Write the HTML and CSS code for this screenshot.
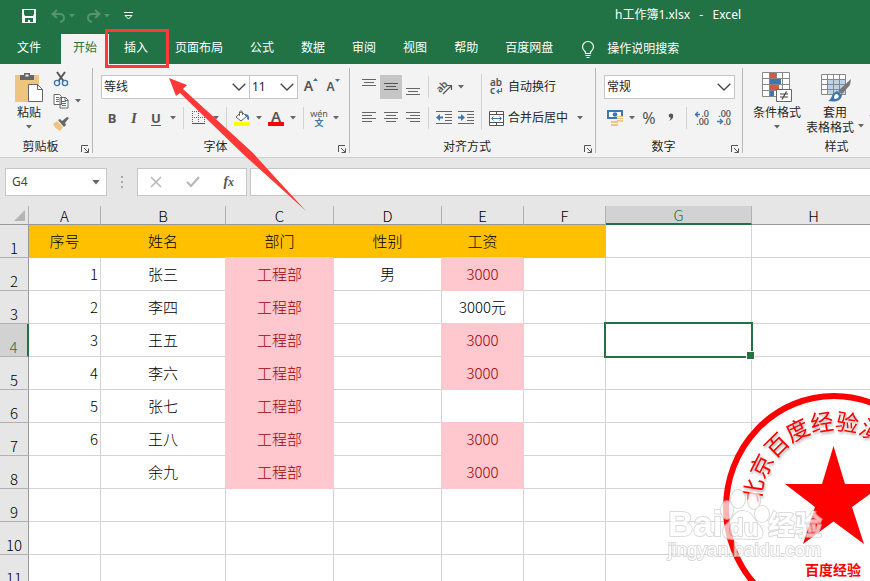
FILE: index.html
```html
<!DOCTYPE html>
<html lang="zh-CN">

<head>
    <meta charset="UTF-8">
    <meta name="viewport" content="width=device-width, initial-scale=1.0">
    <title>h工作簿1.xlsx - Excel</title>
    <link rel="stylesheet" href="styles.css">
</head>

<body>
    <!-- shared icons -->
    <svg class="defs" width="0" height="0" aria-hidden="true">
        <symbol id="caret" viewBox="0 0 6 4"><path d="M0 0h6L3 3.5z" fill="currentColor" /></symbol>
        <symbol id="chevron" viewBox="0 0 14 8"><path d="M.7.7 7 7 13.3.7" fill="none" stroke="#444" stroke-width="1.3" /></symbol>
        <symbol id="launch" viewBox="0 0 8 8"><path d="M.5 7V.5H7M3 3l4 4M7.5 3.500v4H3.500" fill="none" stroke="#555" /></symbol>
    </svg>

    <header class="titlebar">
        <button class="quick save" aria-label="保存"><svg width="14" height="14" viewBox="0 0 14 14"><path d="M0 0h14v14H0z" fill="#fff" /><path d="M2 1h10v4l-1 2H3L2 5zM3 9h8v4H8v-2H6v2H3z" fill="#217346" /></svg></button>
        <button class="quick faded" aria-label="撤消"><svg width="15" height="14" viewBox="0 0 15 14"><path d="M6 1 1.500 5 6 9M2 5h7c5 0 5.500 7 0 8" fill="none" stroke="currentColor" stroke-width="2" /></svg></button>
        <button class="quick-caret faded" aria-label="撤消列表"><svg width="6" height="4"><use href="#caret" /></svg></button>
        <button class="quick faded" aria-label="恢复"><svg width="15" height="14" viewBox="0 0 15 14"><path d="m9 1 4.500 4L9 9M13 5H6C1 5 .5 12 6 13" fill="none" stroke="currentColor" stroke-width="2" /></svg></button>
        <button class="quick-caret faded" aria-label="恢复列表"><svg width="6" height="4"><use href="#caret" /></svg></button>
        <button class="quick" aria-label="自定义快速访问工具栏"><svg width="9" height="8" viewBox="0 0 9 8"><path d="M0 .5h9M1 3.500h7L4.500 7z" fill="none" stroke="#fff" /></svg></button>
        <span class="doc-title">h工作簿1.xlsx&nbsp;&nbsp; -&nbsp;&nbsp; Excel</span>
    </header>

    <nav class="tabs">
        <button class="tab file">文件</button>
        <button class="tab active">开始</button>
        <button class="tab">插入</button>
        <button class="tab">页面布局</button>
        <button class="tab">公式</button>
        <button class="tab">数据</button>
        <button class="tab">审阅</button>
        <button class="tab">视图</button>
        <button class="tab">帮助</button>
        <button class="tab">百度网盘</button>
        <button class="tell-me">
            <svg width="14" height="17" viewBox="0 0 14 17"><path d="M4.500 12.500V11C3 9.500 1.500 8.500 1.500 6a5.500 5.500 0 0 1 11 0c0 2.500-1.500 3.500-3 5v1.500zM4.500 14.500h5M5.500 16.500h3" fill="none" stroke="#fff" stroke-width="1.2" /></svg>
            操作说明搜索
        </button>
    </nav>

    <section class="ribbon">
        <div class="group clipboard">
            <div class="group-body">
                <button class="big paste">
                    <svg width="30" height="30" viewBox="0 0 30 30"><path d="M1 3h24v27H1z" fill="#eec57e" /><path d="M6 3h4V1h6v2h4v5H6z" fill="#666" /><path d="M11.500 2.500h3v2h-3z" fill="#f3f3f3" /><path d="M14.500 12.500h9l5 5v12h-14z" fill="#fff" stroke="#666" /><path d="M23.500 12.500v5h5" fill="none" stroke="#666" /></svg>
                    <span>粘贴</span>
                    <svg width="6" height="4"><use href="#caret" /></svg>
                </button>
                <div class="stack">
                    <button class="icon" aria-label="剪切"><svg width="16" height="16" viewBox="0 0 16 16"><path d="m4 1 6.500 9M12 1 5.500 10" stroke="#555" stroke-width="2" /><circle cx="4" cy="12" r="2.600" fill="none" stroke="#3e76ad" stroke-width="1.400" /><circle cx="12" cy="12" r="2.600" fill="none" stroke="#3e76ad" stroke-width="1.400" /></svg></button>
                    <div class="tools">
                        <button class="icon" aria-label="复制"><svg width="16" height="15" viewBox="0 0 16 15"><path d="M1 .5h5.500l2 2v8H1zM7 3.500h5.500l2.500 2.500v8H7z" fill="#fff" stroke="#666" /><path d="M12 3.500v3h3" fill="none" stroke="#666" /><path d="M3 3.500h3M3 5.500h3M3 7.500h3M9 7.500h4M9 9.500h4M9 11.500h4" stroke="#3e76ad" /></svg></button>
                        <button class="drop" aria-label="复制选项"><svg width="6" height="4"><use href="#caret" /></svg></button>
                    </div>
                    <button class="icon" aria-label="格式刷"><svg width="16" height="15" viewBox="0 0 16 15"><path d="m0 8 4-3 6 6-3 4C4 13 2 12 0 8z" fill="#eec57e" /><path d="m5 4 2-1 2 2 5-4 2 1-4 5 1 2-2 2z" fill="#666" /></svg></button>
                </div>
            </div>
            <div class="group-foot"><span>剪贴板</span><button class="launcher" aria-label="剪贴板设置"><svg width="8" height="8"><use href="#launch" /></svg></button></div>
        </div>

        <div class="group font">
            <div class="group-body rows">
                <div class="tools">
                    <div class="combo font-name"><select aria-label="字体"><option>等线</option></select><svg width="14" height="8"><use href="#chevron" /></svg></div>
                    <div class="combo font-size"><select aria-label="字号"><option>11</option></select><svg width="14" height="8"><use href="#chevron" /></svg></div>
                    <button class="icon grow" aria-label="增大字号">A<svg width="5" height="3" viewBox="0 0 5 3"><path d="M0 3h5L2.500 0z" fill="#3e76ad" /></svg></button>
                    <button class="icon shrink" aria-label="减小字号">A<svg width="5" height="3" viewBox="0 0 5 3"><path d="M0 0h5L2.500 3z" fill="#3e76ad" /></svg></button>
                </div>
                <div class="tools">
                    <button class="icon letter bold" aria-label="加粗">B</button>
                    <button class="icon letter italic" aria-label="倾斜">I</button>
                    <button class="icon letter under" aria-label="下划线">U</button>
                    <button class="drop" aria-label="下划线选项"><svg width="6" height="4"><use href="#caret" /></svg></button>
                    <i class="sep"></i>
                    <button class="icon" aria-label="边框"><svg width="14" height="14" viewBox="0 0 14 14"><path d="M.5 0v13M6.500 0v13M12.500 0v13M0 .5h13M0 6.500h13" stroke="#666" stroke-dasharray="1 1" /><path d="M0 12.500h13" stroke="#555" /></svg></button>
                    <button class="drop" aria-label="边框选项"><svg width="6" height="4"><use href="#caret" /></svg></button>
                    <i class="sep"></i>
                    <button class="icon" aria-label="填充颜色"><svg width="16" height="16" viewBox="0 0 16 16"><path d="M7 2 2 7l5 4 6-5z" fill="#fff" stroke="#666" /><path d="M5.500 6V2q1.500-3 3 0v3" fill="none" stroke="#666" /><path d="M11 4q5 0 4 6l-2-1q1-3-2-3z" fill="#3e76ad" /><path d="M0 12h16v4H0z" fill="#ff0" /></svg></button>
                    <button class="drop" aria-label="填充颜色选项"><svg width="6" height="4"><use href="#caret" /></svg></button>
                    <button class="icon font-color" aria-label="字体颜色">A</button>
                    <button class="drop" aria-label="字体颜色选项"><svg width="6" height="4"><use href="#caret" /></svg></button>
                    <i class="sep"></i>
                    <button class="icon phonetic" aria-label="拼音"><span>wén</span><b>文</b></button>
                    <button class="drop" aria-label="拼音选项"><svg width="6" height="4"><use href="#caret" /></svg></button>
                </div>
            </div>
            <div class="group-foot"><span>字体</span><button class="launcher" aria-label="字体设置"><svg width="8" height="8"><use href="#launch" /></svg></button></div>
        </div>

        <div class="group align">
            <div class="group-body">
                <div class="rows">
                    <div class="tools">
                        <button class="icon" aria-label="顶端对齐"><svg width="14" height="18" viewBox="0 0 14 18"><path d="M0 1.500h14M2 4.500h10M0 7.500h14" stroke="#666" /></svg></button>
                        <button class="icon pressed" aria-label="垂直居中"><svg width="14" height="18" viewBox="0 0 14 18"><path d="M0 5.500h14M2 8.500h10M0 11.500h14" stroke="#555" /></svg></button>
                        <button class="icon" aria-label="底端对齐"><svg width="14" height="18" viewBox="0 0 14 18"><path d="M0 10.500h14M2 13.500h10M0 16.500h14" stroke="#666" /></svg></button>
                        <i class="sep"></i>
                        <button class="icon" aria-label="方向"><svg width="17" height="16" viewBox="0 0 17 16"><text x="0" y="11" transform="rotate(-45 6 8)" class="ab">ab</text><path d="m7 15 8-8M11 6.500h4.500V11" fill="none" stroke="#555" stroke-width="1.200" /></svg></button>
                        <button class="drop" aria-label="方向选项"><svg width="6" height="4"><use href="#caret" /></svg></button>
                    </div>
                    <div class="tools">
                        <button class="icon" aria-label="左对齐"><svg width="14" height="12" viewBox="0 0 14 12"><path d="M0 .5h14M0 3.500h10M0 6.500h14M0 9.500h10" stroke="#666" /></svg></button>
                        <button class="icon" aria-label="居中"><svg width="14" height="12" viewBox="0 0 14 12"><path d="M0 .5h14M2 3.500h10M0 6.500h14M2 9.500h10" stroke="#666" /></svg></button>
                        <button class="icon" aria-label="右对齐"><svg width="14" height="12" viewBox="0 0 14 12"><path d="M0 .5h14M4 3.500h10M0 6.500h14M4 9.500h10" stroke="#666" /></svg></button>
                        <i class="sep"></i>
                        <button class="icon" aria-label="减少缩进"><svg width="16" height="14" viewBox="0 0 16 14"><path d="M0 .5h16M9 3.500h7M9 6.500h7M9 9.500h7M0 12.500h16" stroke="#666" /><path d="M0 6.500 4 3v2.500h3v2H4V10z" fill="#3e76ad" /></svg></button>
                        <button class="icon" aria-label="增加缩进"><svg width="16" height="14" viewBox="0 0 16 14"><path d="M0 .5h16M9 3.500h7M9 6.500h7M9 9.500h7M0 12.500h16" stroke="#666" /><path d="M7 6.500 3 3v2.500H0v2h3V10z" fill="#3e76ad" /></svg></button>
                    </div>
                </div>
                <i class="sep tall"></i>
                <div class="rows">
                    <button class="wide">
                        <svg width="15" height="16" viewBox="0 0 15 16"><text x="1" y="7" class="ab">ab</text><text x="1" y="15" class="ab">c</text><path d="M12.500 9v3.500H8M10 10.500l-2 2 2 2" fill="none" stroke="#3e76ad" stroke-width="1.200" /></svg>
                        自动换行
                    </button>
                    <div class="tools">
                        <button class="wide">
                            <svg width="15" height="15" viewBox="0 0 15 15"><path d="M.5.5h14v14H.5zM0 3.500h15M0 11.500h15M7.500 0v3.500M7.500 11.500V15" fill="#fff" stroke="#555" /><path d="M3 7.500h9M4.500 5.500l-2 2 2 2M10.500 5.500l2 2-2 2" fill="none" stroke="#3e76ad" /></svg>
                            合并后居中
                        </button>
                        <button class="drop" aria-label="合并选项"><svg width="6" height="4"><use href="#caret" /></svg></button>
                    </div>
                </div>
            </div>
            <div class="group-foot"><span>对齐方式</span><button class="launcher" aria-label="对齐设置"><svg width="8" height="8"><use href="#launch" /></svg></button></div>
        </div>

        <div class="group number">
            <div class="group-body rows">
                <div class="combo"><select aria-label="数字格式"><option>常规</option></select><svg width="14" height="8"><use href="#chevron" /></svg></div>
                <div class="tools">
                    <button class="icon" aria-label="会计数字格式"><svg width="16" height="16" viewBox="0 0 16 16"><path d="M0 0h16v9H0z" fill="#3e76ad" /><path d="M2 2h12v5H2z" fill="#fff" /><circle cx="8" cy="4.500" r="2.300" fill="#3e76ad" /><path d="M10 6h6v6h-6zM4 11h7v5H4z" fill="#eec57e" /><path d="M10 7.500h6M10 9.500h6M4 13.500h7M11.500 12h3" stroke="#f3f3f3" /></svg></button>
                    <button class="drop" aria-label="会计格式选项"><svg width="6" height="4"><use href="#caret" /></svg></button>
                    <button class="icon percent" aria-label="百分比样式">%</button>
                    <button class="icon" aria-label="千位分隔样式"><svg width="6" height="10" viewBox="0 0 6 10"><path d="M1 1.500Q3-.5 5 1.500 6 6 1 8q2-2 1.500-3.500Q0 4 1 1.500z" fill="#555" /></svg></button>
                    <i class="sep"></i>
                    <button class="icon" aria-label="增加小数位数"><svg width="16" height="16" viewBox="0 0 16 16"><text x="15" y="7" class="digits">.0</text><text x="15" y="15" class="digits">.00</text><path d="M6 4.500H1.500M4 2 1.500 4.500 4 7" fill="none" stroke="#3e76ad" stroke-width="1.400" /></svg></button>
                    <button class="icon" aria-label="减少小数位数"><svg width="16" height="16" viewBox="0 0 16 16"><text x="15" y="7" class="digits">.00</text><text x="15" y="15" class="digits">.0</text><path d="M1 11.500h5.500M4 9l2.500 2.500L4 14" fill="none" stroke="#3e76ad" stroke-width="1.400" /></svg></button>
                </div>
            </div>
            <div class="group-foot"><span>数字</span><button class="launcher" aria-label="数字设置"><svg width="8" height="8"><use href="#launch" /></svg></button></div>
        </div>

        <div class="group styles">
            <div class="group-body">
                <button class="big">
                    <svg width="30" height="30" viewBox="0 0 30 30"><path d="M.5.5h27v24H.5z" fill="#fff" /><path d="M8 1h6v5H8zM8 13h9v5H8z" fill="#d35c40" /><path d="M8 7h11v5H8zM8 19h4v5H8z" fill="#3e76ad" /><path d="M.5.5h27v24H.5zM7.500 0v24M14.500 0v6M20.500 0v24M0 6.500h28M0 12.500h28M0 18.500h28" fill="none" stroke="#888" /><path d="M14.500 17.500h15v12h-15z" fill="#fff" stroke="#666" /><path d="M18 22h8M18 25h8M24.500 19.500l-4.500 8" stroke="#444" stroke-width="1.200" /></svg>
                    <span>条件格式</span>
                    <svg width="6" height="4"><use href="#caret" /></svg>
                </button>
                <button class="big">
                    <svg width="30" height="30" viewBox="0 0 30 30"><path d="M1.500 2.500h24v20h-24z" fill="#fff" /><path d="M8 8h18v15H8z" fill="#bcd2ea" /><path d="M1.500 2.500h24v20h-24zM7.500 2v20M13.500 2v20M19.500 2v20M1 7.500h24M1 12.500h24M1 17.500h24" fill="none" stroke="#888" /><path d="m31 7-1 6-8 9-4-3z" fill="#777" /><path d="m17 19 5 4c-1 7-8 7-14 6 4-1 3-8 9-10z" fill="#3e76ad" /><path d="M14 26q0-4 3-4l2 2q-1 3-4 3z" fill="#fff" /></svg>
                    <span>套用</span>
                    <span>表格格式 <svg width="6" height="4"><use href="#caret" /></svg></span>
                </button>
                <button class="big cell-styles">
                    <svg width="30" height="30" viewBox="0 0 30 30"><path d="M4.500 2.500h22v20h-22z" fill="#fff" stroke="#888" /></svg>
                    <span>单元格样式</span>
                    <svg width="6" height="4"><use href="#caret" /></svg>
                </button>
            </div>
            <div class="group-foot"><span>样式</span></div>
        </div>
    </section>

    <section class="formula-bar">
        <label class="name-box"><input type="text" value="G4" aria-label="名称框"><svg width="8" height="5"><use href="#caret" /></svg></label>
        <svg class="grip" width="3" height="12" viewBox="0 0 3 12"><path d="M0 0h2v2H0zM0 5h2v2H0zM0 10h2v2H0z" fill="#aaa" /></svg>
        <div class="formula-tools">
            <button aria-label="取消"><svg width="12" height="12" viewBox="0 0 12 12"><path d="m1 1 10 10M11 1 1 11" stroke="#b8b8b8" stroke-width="1.600" /></svg></button>
            <button aria-label="输入"><svg width="14" height="12" viewBox="0 0 14 12"><path d="m1 6 4 4 8-9" fill="none" stroke="#b8b8b8" stroke-width="2.200" /></svg></button>
            <button class="fx" aria-label="插入函数">f<small>x</small></button>
        </div>
        <input class="formula" type="text" aria-label="编辑栏">
    </section>

    <main class="sheet">
        <table>
            <colgroup>
                <col class="w-head"><col class="w-a"><col class="w-b"><col class="w-c"><col class="w-c"><col class="w-e"><col class="w-e"><col class="w-g"><col>
            </colgroup>
            <thead>
                <tr>
                    <th class="corner"><svg width="11" height="11" viewBox="0 0 11 11"><path d="M11 0v11H0z" fill="#b4b4b4" /></svg></th>
                    <th scope="col">A</th><th scope="col">B</th><th scope="col">C</th><th scope="col">D</th><th scope="col">E</th><th scope="col">F</th><th scope="col" class="current">G</th><th scope="col">H</th>
                </tr>
            </thead>
            <tbody>
                <tr class="heading"><th scope="row">1</th><td>序号</td><td>姓名</td><td>部门</td><td>性别</td><td>工资</td><td></td><td></td><td></td></tr>
                <tr><th scope="row">2</th><td class="num">1</td><td>张三</td><td class="bad">工程部</td><td>男</td><td class="bad">3000</td><td></td><td></td><td></td></tr>
                <tr><th scope="row">3</th><td class="num">2</td><td>李四</td><td class="bad">工程部</td><td></td><td>3000元</td><td></td><td></td><td></td></tr>
                <tr><th scope="row" class="current">4</th><td class="num">3</td><td>王五</td><td class="bad">工程部</td><td></td><td class="bad">3000</td><td></td><td class="selected"></td><td></td></tr>
                <tr><th scope="row">5</th><td class="num">4</td><td>李六</td><td class="bad">工程部</td><td></td><td class="bad">3000</td><td></td><td></td><td></td></tr>
                <tr><th scope="row">6</th><td class="num">5</td><td>张七</td><td class="bad">工程部</td><td></td><td></td><td></td><td></td><td></td></tr>
                <tr><th scope="row">7</th><td class="num">6</td><td>王八</td><td class="bad">工程部</td><td></td><td class="bad">3000</td><td></td><td></td><td></td></tr>
                <tr><th scope="row">8</th><td></td><td>余九</td><td class="bad">工程部</td><td></td><td class="bad">3000</td><td></td><td></td><td></td></tr>
                <tr><th scope="row">9</th><td></td><td></td><td></td><td></td><td></td><td></td><td></td><td></td></tr>
                <tr><th scope="row">10</th><td></td><td></td><td></td><td></td><td></td><td></td><td></td><td></td></tr>
                <tr><th scope="row">11</th><td></td><td></td><td></td><td></td><td></td><td></td><td></td><td></td></tr>
                <tr><th scope="row">12</th><td></td><td></td><td></td><td></td><td></td><td></td><td></td><td></td></tr>
            </tbody>
        </table>

        <!-- round stamp -->
        <svg class="stamp" width="222" height="230" viewBox="0 0 222 230">
            <ellipse cx="111" cy="115" rx="108" ry="112" fill="#fff" stroke="#f00" stroke-width="6" />
            <path id="arc" d="M38 110a73 73 0 0 1 146 0" fill="none" />
            <text class="stamp-arc"><textPath href="#arc">北京百度经验演示专用</textPath></text>
            <path d="M110.500 53l11.500 38h39l-32 23 12 37-30.500-22.500L80 151l12-37-30-23h37z" fill="#f00" />
            <text x="110" y="182" class="stamp-name">百度经验</text>
        </svg>

        <svg class="watermark" width="164" height="76" viewBox="0 0 164 76">
            <g class="mark">
                <ellipse cx="63" cy="24" rx="6" ry="9" />
                <ellipse cx="74" cy="13" rx="7" ry="9" />
                <ellipse cx="90" cy="14" rx="6" ry="9" />
                <ellipse cx="98" cy="28" rx="7" ry="8" />
                <path d="M79 25c9 0 10 8 15 13s8 15-3 15c-8 0-15-1-23 0-10 0-12-9-5-15s7-13 16-13z" />
                <text x="4" y="50" class="mark-big">Bai</text>
                <text x="65" y="50" class="mark-du">du</text>
                <text x="104" y="49" class="mark-cn">经验</text>
                <text x="4" y="70" class="mark-url">jingyan.baidu.com</text>
            </g>
        </svg>
    </main>

    <!-- callout pointing at the insert tab -->
    <svg class="callout" width="320" height="220" viewBox="0 0 320 220" aria-hidden="true">
        <path d="M106.500 30.500h61v36h-61z" fill="none" stroke="#ff3838" stroke-width="3" />
        <path d="m169 78 18 7-4 4 69 63 54 59-62-56-64-62-4 3z" fill="#ff3838" />
    </svg>
</body>

</html>
```

FILE: styles.css
```css
* {
    box-sizing: border-box;
}

body {
    margin: 0;
    height: 100vh;
    display: flex;
    flex-direction: column;
    overflow: hidden;
    position: relative;
    font-family: "Noto Sans", "Noto Sans CJK SC", sans-serif;
    font-size: 12px;
    line-height: 16px;
    color: #262626;
    background: #e6e6e6;
}

button,
input,
select {
    font: inherit;
    color: inherit;
    background: none;
    border: none;
    margin: 0;
    padding: 0;
}

svg {
    display: block;
    flex: none;
    overflow: visible;
}

.defs {
    position: absolute;
}

/* title bar */
.titlebar {
    display: flex;
    align-items: center;
    height: 34px;
    padding: 0 129px 2px 21px;
    background: #217346;
    color: #fff;
}

.quick {
    display: flex;
    justify-content: center;
    width: 16px;
}

.quick.save {
    margin-right: 13px;
}

.quick-caret {
    width: 12px;
    margin-right: 7px;
    display: flex;
    justify-content: center;
}

.faded {
    color: #56946f;
}

.doc-title {
    margin-left: auto;
    padding-bottom: 3px;
}

/* tabs */
.tabs {
    display: flex;
    gap: 3px;
    height: 30px;
    padding-left: 5px;
    background: #217346;
    color: #fff;
}

.tab {
    padding: 0 12px 2px;
    white-space: nowrap;
}

.tab.file {
    margin-right: 5px;
}

.tab.active {
    background: #f3f3f3;
    color: #217346;
}

.tell-me {
    display: flex;
    align-items: center;
    gap: 12px;
    margin-left: 13px;
    white-space: nowrap;
}

/* ribbon */
.ribbon {
    display: flex;
    flex: none;
    height: 94px;
    overflow: hidden;
    background: #f3f3f3;
    border-bottom: 1px solid #d0d0d0;
    padding: 4px 0;
}

.group {
    display: flex;
    flex: none;
    flex-direction: column;
    justify-content: space-between;
    border-right: 1px solid #b8b8b8;
    padding-left: 8px;
}

.clipboard {
    width: 93px;
}

.font {
    width: 257px;
}

.align {
    width: 246px;
}

.number {
    width: 147px;
}

.styles {
    width: 194px;
    padding-left: 5px;
}

.group-body {
    display: flex;
    height: 70px;
}

.rows {
    display: flex;
    flex-direction: column;
    gap: 7px;
    padding-top: 7px;
}

.align .group-body .rows:last-child .tools {
    gap: 6px;
}

.tools {
    display: flex;
    align-items: center;
    height: 24px;
}

.group-foot {
    display: flex;
    align-items: flex-end;
    margin-left: -8px;
    padding-right: 3px;
    line-height: 12px;
    white-space: nowrap;
}

.group-foot span {
    flex: 1;
    text-align: center;
}

.icon {
    display: flex;
    flex: none;
    align-items: center;
    justify-content: center;
    width: 22px;
    height: 24px;
    color: #555;
}

.icon.pressed {
    background: #c6c6c6;
}

.drop {
    display: flex;
    justify-content: center;
    width: 12px;
    color: #666;
}

.sep {
    width: 1px;
    height: 22px;
    margin: 0 4px;
    background: #d2d2d2;
}

.sep.tall {
    height: 56px;
    margin-top: 6px;
}

.big {
    display: flex;
    flex: none;
    flex-direction: column;
    align-items: center;
    width: 58px;
    padding-top: 4px;
    white-space: nowrap;
    line-height: 15px;
}

.big span {
    display: flex;
    align-items: center;
    gap: 4px;
}

.big svg:first-child {
    margin-bottom: 3px;
}

.big svg:last-child {
    color: #666;
}

.big > svg:last-child {
    margin-top: 5px;
}

.paste {
    width: 42px;
}

.cell-styles {
    margin-left: 6px;
}

.stack .icon,
.stack .tools {
    height: 22px;
}

.wide {
    display: flex;
    align-items: center;
    gap: 4px;
    height: 24px;
    padding-left: 3px;
    white-space: nowrap;
}

.combo {
    display: grid;
    align-items: center;
    height: 24px;
    border: 1px solid #c6c6c6;
    background: #fff;
}

.combo select,
.combo svg {
    grid-area: 1 / 1;
}

.combo select {
    appearance: none;
    width: 100%;
    padding-left: 2px;
}

.combo svg {
    justify-self: end;
    margin-right: 3px;
    pointer-events: none;
}

.number .combo {
    width: 131px;
}

.font-name {
    width: 149px;
}

.font-size {
    width: 48px;
    border-left: none;
    margin-right: 2px;
}

.grow,
.shrink {
    align-items: flex-start;
    padding-top: 3px;
    font-weight: 600;
    font-size: 14px;
}

.shrink {
    font-size: 12px;
    padding-top: 4px;
}

.letter {
    font-weight: 700;
    font-size: 13px;
}

.italic {
    font-family: "Liberation Serif", serif;
    font-style: italic;
    font-size: 15px;
}

.under {
    text-decoration: underline;
    text-underline-offset: 2px;
}

.font-color {
    width: 16px;
    height: 16px;
    margin: 0 3px;
    border-bottom: 4px solid #f00;
    font-weight: 600;
    font-size: 15px;
    line-height: 12px;
}

.phonetic {
    flex-direction: column;
    font-size: 9px;
    line-height: 9px;
}

.phonetic b {
    color: #3e76ad;
}

.percent {
    font-size: 16px;
}

.ab {
    font: 600 10px "Noto Sans", sans-serif;
    fill: #555;
}

.digits {
    font: 500 9px "Noto Sans", sans-serif;
    fill: #444;
    text-anchor: end;
}

/* formula bar */
.formula-bar {
    display: flex;
    flex: none;
    align-items: center;
    height: 48px;
    padding-left: 5px;
}

.name-box,
.formula-tools,
.formula {
    display: flex;
    align-items: center;
    height: 28px;
    border: 1px solid #c6c6c6;
    background: #fff;
}

.name-box {
    width: 102px;
    padding: 0 6px;
    color: #666;
}

.name-box input {
    flex: 1;
    min-width: 0;
    color: #444;
}

.grip {
    margin: 0 13px 0 14px;
}

.formula-tools {
    justify-content: space-around;
    width: 110px;
    margin-right: 3px;
}

.fx {
    font: italic 700 14px "Liberation Serif", serif;
    color: #555;
}

.fx small {
    font-size: 12px;
}

.formula {
    flex: 1;
    min-width: 0;
    border-right: none;
    padding: 0 6px;
}

/* worksheet */
.sheet {
    flex: 1;
    min-height: 0;
    position: relative;
    overflow: hidden;
    background: #fff;
}

table {
    width: 100%;
    min-width: 876px;
    table-layout: fixed;
    border-collapse: separate;
    border-spacing: 0;
    font-family: "Noto Sans CJK SC", sans-serif;
    font-size: 15px;
    font-weight: 300;
    line-height: 18px;
    color: #000;
}

.w-head {
    width: 29px;
}

.w-a {
    width: 72px;
}

.w-b {
    width: 125px;
}

.w-c {
    width: 108px;
}

.w-e {
    width: 82px;
}

.w-g {
    width: 146px;
}

th {
    padding: 0;
    font-weight: 300;
    background: #e6e6e6;
    border-right: 1px solid #b1b1b1;
    border-bottom: 1px solid #999;
}

thead th {
    height: 19px;
    line-height: 17px;
    vertical-align: bottom;
}

.corner svg {
    margin: 0 3px 3px auto;
}

tbody th {
    height: 33px;
    vertical-align: bottom;
    border-right-color: #999;
    border-bottom-color: #b1b1b1;
}

th.current {
    background: #d2d2d2;
    color: #217346;
}

thead .current {
    border-bottom: 2px solid #217346;
}

tbody .current {
    border-right: 2px solid #217346;
}

td {
    padding: 0;
    text-align: center;
    border-right: 1px solid #d4d4d4;
    border-bottom: 1px solid #d4d4d4;
}

td.num {
    text-align: right;
    padding-right: 2px;
}

.heading td:nth-child(-n+7) {
    background: #ffc000;
    border-color: #ffc000;
}

td.bad {
    background: #ffc7ce;
    border-color: #ffc7ce;
    box-shadow: -1px -1px 0 #ffc7ce;
    color: #9c0006;
}

.selected {
    position: relative;
}

.selected::before {
    content: "";
    position: absolute;
    inset: -2px;
    border: 2px solid #217346;
}

.selected::after {
    content: "";
    position: absolute;
    right: -4px;
    bottom: -4px;
    width: 7px;
    height: 7px;
    background: #217346;
    border: 1px solid #fff;
}

.stamp {
    position: absolute;
    left: 723px;
    top: 187px;
}

.stamp-arc {
    font-family: "Noto Sans CJK SC", sans-serif;
    font-size: 23px;
    fill: #f00;
    filter: drop-shadow(1px 2px 1px rgba(0, 0, 0, 0.3));
}

.stamp-name {
    font-family: "Noto Sans CJK SC", sans-serif;
    font-size: 14px;
    font-weight: 700;
    text-anchor: middle;
    fill: #f00;
}

.watermark {
    position: absolute;
    left: 664px;
    top: 280px;
}

.mark {
    fill: #fff;
    stroke: #ccc;
    stroke-width: 2px;
    paint-order: stroke;
    opacity: 0.7;
    font-family: "Liberation Sans", "Noto Sans CJK SC", sans-serif;
}

.mark-big {
    font-size: 35px;
    font-weight: 700;
}

.mark-du {
    font-size: 24px;
    font-weight: 700;
}

.mark-cn {
    font-size: 27px;
    font-weight: 700;
}

.mark-url {
    font-size: 19px;
}

.callout {
    position: absolute;
    left: 0;
    top: 0;
    pointer-events: none;
}
```
